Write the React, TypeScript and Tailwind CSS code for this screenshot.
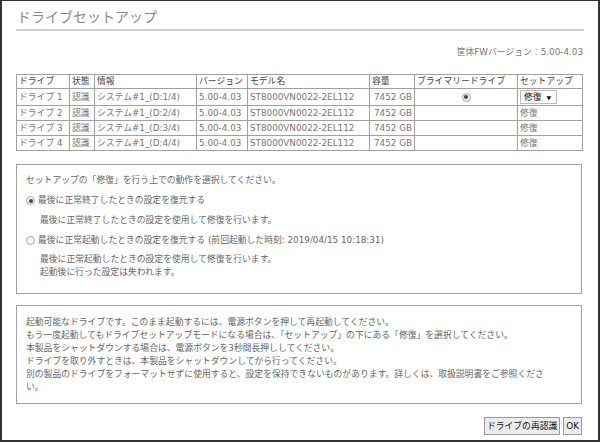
import React, { useState } from 'react';

type Drive = {
  name: string;
  status: string;
  info: string;
  version: string;
  model: string;
  capacity: string;
};

const drives: Drive[] = [1, 2, 3, 4].map((n) => ({
  name: `ドライブ ${n}`,
  status: '認識',
  info: `システム#1_(D:${n}/4)`,
  version: '5.00-4.03',
  model: 'ST8000VN0022-2EL112',
  capacity: '7452 GB',
}));

// small grey radio like the old IE/Windows one
const Radio = ({ checked }: { checked: boolean }) => (
  <span className="inline-flex h-[9px] w-[9px] shrink-0 items-center justify-center rounded-full border border-[#a8a8a8] bg-[#f2f2f2]">
    {checked && <span className="h-[4px] w-[4px] rounded-full bg-[#444]" />}
  </span>
);

const th = 'whitespace-nowrap border border-[#a0a0a0] px-[2px] text-left font-normal text-[#444]';
const td = 'whitespace-nowrap border border-[#a0a0a0] px-[2px] text-[#777]';

export default function App() {
  const [mode, setMode] = useState<'shutdown' | 'boot'>('shutdown');

  return (
    <div
      className="flex h-[442px] w-[600px] flex-col overflow-hidden border-2 border-t border-[#333] bg-white px-[14px] text-[8.8px] leading-[13px] text-[#666]"
      style={{ fontFamily: '"DejaVu Sans", "Noto Sans CJK JP", sans-serif' }}
    >
      {/* heading */}
      <div className="mt-[6px] border-b-2 border-[#cfcfcf] pb-[2px]">
        <h1 className="pl-px text-[14px] leading-[20px] text-[#888]">ドライブセットアップ</h1>
      </div>

      <div className="mt-[15px] pr-px text-right text-[#777]">筐体FWバージョン：5.00-4.03</div>

      {/* drive table */}
      <table className="mt-[15px] w-[566px] table-fixed border-collapse">
        <colgroup>
          <col className="w-[53px]" />
          <col className="w-[25px]" />
          <col className="w-[102px]" />
          <col className="w-[51px]" />
          <col className="w-[122px]" />
          <col className="w-[45px]" />
          <col className="w-[103px]" />
          <col className="w-[65px]" />
        </colgroup>
        <thead>
          <tr className="h-[14px]">
            <th className={th}>ドライブ</th>
            <th className={th}>状態</th>
            <th className={th}>情報</th>
            <th className={th}>バージョン</th>
            <th className={th}>モデル名</th>
            <th className={th}>容量</th>
            <th className={th}>プライマリードライブ</th>
            <th className={th}>セットアップ</th>
          </tr>
        </thead>
        <tbody>
          {drives.map((d, i) => (
            <tr key={d.name} className={i === 0 ? 'h-[17px]' : 'h-[15px]'}>
              <td className={td}>{d.name}</td>
              <td className={td}>{d.status}</td>
              <td className={td}>{d.info}</td>
              <td className={td}>{d.version}</td>
              <td className={td}>{d.model}</td>
              <td className={`${td} text-right`}>{d.capacity}</td>
              <td className={`${td} text-center`}>
                {i === 0 && (
                  <span className="inline-flex align-middle">
                    <Radio checked />
                  </span>
                )}
              </td>
              <td className={td}>
                {i === 0 ? (
                  <span className="flex h-[14px] w-[37px] items-center gap-[5px] border border-[#bbb] bg-white pl-[3px] text-[#111]">
                    修復
                    <span className="text-[6px]">▼</span>
                  </span>
                ) : (
                  '修復'
                )}
              </td>
            </tr>
          ))}
        </tbody>
      </table>

      {/* repair mode choice */}
      <div className="mt-[13px] h-[130px] w-[566px] shrink-0 border border-[#a0a0a0] pl-[9px] pt-[9px]">
        <p>セットアップの「修復」を行う上での動作を選択してください。</p>
        <label className="mt-[7px] flex items-center gap-[3px]" onClick={() => setMode('shutdown')}>
          <Radio checked={mode === 'shutdown'} />
          <span>最後に正常終了したときの設定を復元する</span>
        </label>
        <p className="mt-[7px] pl-[14px]">最後に正常終了したときの設定を使用して修復を行います。</p>
        <label className="mt-[7px] flex items-center gap-[3px]" onClick={() => setMode('boot')}>
          <Radio checked={mode === 'boot'} />
          <span>最後に正常起動したときの設定を復元する (前回起動した時刻: 2019/04/15 10:18:31)</span>
        </label>
        <div className="mt-[6px] pl-[14px]">
          <p>最後に正常起動したときの設定を使用して修復を行います。</p>
          <p>起動後に行った設定は失われます。</p>
        </div>
      </div>

      {/* notes */}
      <div className="mt-[11px] h-[99px] w-[566px] shrink-0 border border-[#a0a0a0] pl-[9px] pr-[22px] pt-[10px]">
        <p>起動可能なドライブです。このまま起動するには、電源ボタンを押して再起動してください。</p>
        <p>もう一度起動してもドライブセットアップモードになる場合は、「セットアップ」の下にある「修復」を選択してください。</p>
        <p>本製品をシャットダウンする場合は、電源ボタンを3秒間長押ししてください。</p>
        <p>ドライブを取り外すときは、本製品をシャットダウンしてから行ってください。</p>
        <p>別の製品のドライブをフォーマットせずに使用すると、設定を保持できないものがあります。詳しくは、取扱説明書をご参照ください。</p>
      </div>

      <div className="mt-[13px] flex w-[566px] justify-end gap-[3px]">
        <button className="h-[18px] border border-[#9a9a9a] bg-[#ececec] px-[2px] text-[8.8px] text-[#111]">ドライブの再認識</button>
        <button className="h-[18px] border border-[#9a9a9a] bg-[#ececec] px-[2px] text-[8.8px] text-[#111]">OK</button>
      </div>
    </div>
  );
}
